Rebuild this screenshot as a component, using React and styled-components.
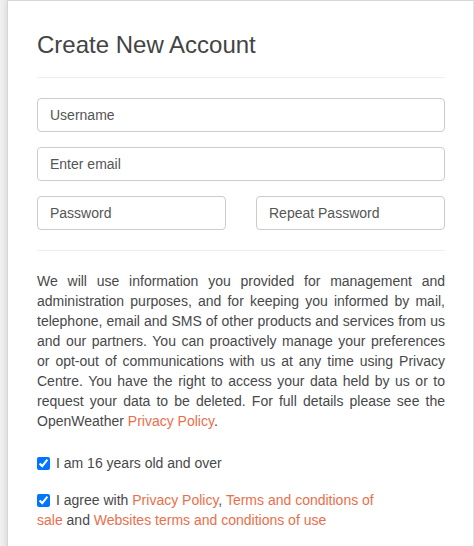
import React from 'react';
import styled, { createGlobalStyle } from 'styled-components';

const GlobalStyle = createGlobalStyle`
    html, body {
        margin: 0;
        padding: 0;
        background: #f0f0f0;
    }
    body {
        font-family: "Liberation Sans", Arial, Helvetica, sans-serif;
        font-size: 14px;
        color: #48484a;
    }
`;

const Page = styled.div`
    padding-left: 7px;
    min-height: 546px;
`;

const Card = styled.div`
    box-sizing: border-box;
    width: 467px;
    min-height: 546px;
    background: #fff;
    border-left: 1px solid #d6d6d6;
    border-top: 1px solid #d6d6d6;
    border-right: 1px solid #e2e2e2;
    box-shadow: -2px 0 5px rgba(0, 0, 0, 0.08);
    padding: 31px 28px 20px 29px;
`;

const Title = styled.h3`
    margin: 0;
    font-size: 24px;
    font-weight: 400;
    line-height: 26.4px;
    color: #444446;
`;

const Divider = styled.hr`
    border: 0;
    border-top: 1px solid #eee;
    margin: ${p => p.$top || 19}px 0 20px;
`;

const Field = styled.input`
    box-sizing: border-box;
    display: block;
    width: 100%;
    height: 34px;
    padding: 6px 12px;
    font-family: inherit;
    font-size: 14px;
    color: #555;
    background: #fff;
    border: 1px solid #ccc;
    border-radius: 4px;
    margin-bottom: 15px;
    outline: none;

    &::placeholder {
        color: #555;
        opacity: 1;
    }
`;

const Row = styled.div`
    display: grid;
    grid-template-columns: 1fr 1fr;
    column-gap: 30px;

    ${Field} {
        margin-bottom: 0;
    }
`;

const Notice = styled.p`
    margin: 0 0 22px;
    line-height: 20px;
    text-align: justify;
`;

const Link = styled.a`
    color: #eb6e4b;
    text-decoration: none;
`;

const Check = styled.label`
    display: block;
    max-width: 345px;
    line-height: 20px;
    margin-bottom: ${p => p.$gap || 0}px;

    input {
        width: 13px;
        height: 13px;
        margin: 0 6px 0 0;
        vertical-align: -2px;
        accent-color: #0075ff;
    }
`;

const App = () => {
    return (
        <Page>
            <GlobalStyle />
            <Card>
                <Title>Create New Account</Title>
                <Divider />
                <Field type="text" placeholder="Username" />
                <Field type="email" placeholder="Enter email" />
                <Row>
                    <Field type="password" placeholder="Password" />
                    <Field type="password" placeholder="Repeat Password" />
                </Row>
                <Divider $top={20} />
                <Notice>
                    We will use information you provided for management and administration purposes, and for keeping you informed by mail, telephone, email and SMS of other products and services from us and our partners. You can proactively manage your preferences or opt-out of communications with us at any time using Privacy Centre. You have the right to access your data held by us or to request your data to be deleted. For full details please see the OpenWeather <Link href="#">Privacy Policy</Link>.
                </Notice>
                <Check $gap={17}>
                    <input type="checkbox" defaultChecked />I am 16 years old and over
                </Check>
                <Check>
                    <input type="checkbox" defaultChecked />I agree with <Link href="#">Privacy Policy</Link>, <Link href="#">Terms and conditions of sale</Link> and <Link href="#">Websites terms and conditions of use</Link>
                </Check>
            </Card>
        </Page>
    );
};

export default App;
